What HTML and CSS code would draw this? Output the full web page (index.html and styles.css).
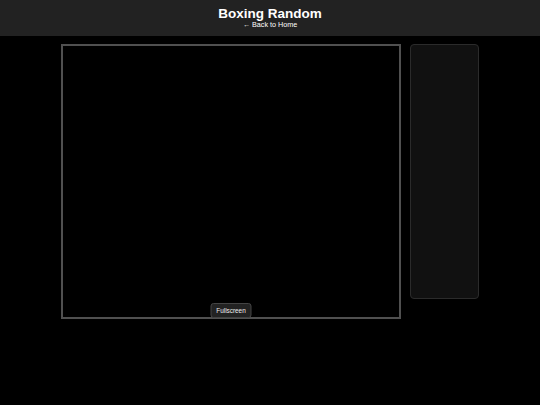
FILE: index.html
```html
<!DOCTYPE html>
<html>
<head>
<meta charset="utf-8">
<title>Boxing Random</title>
<link rel="stylesheet" href="styles.css">
</head>
<body>
<header class="top">
  <h1 class="title">Boxing Random</h1>
  <a class="back" href="#">← Back to Home</a>
</header>
<main class="stage">
  <div class="frame">
    <button class="fs-btn">Fullscreen</button>
  </div>
  <aside class="side"></aside>
</main>
</body>
</html>
```

FILE: styles.css
```css
html, body {
  margin: 0;
  padding: 0;
  background: #000;
  font-family: "Liberation Sans", Arial, sans-serif;
  color: #fff;
}
.top {
  height: 36px;
  box-sizing: border-box;
  padding-top: 6px;
  background: #222;
  text-align: center;
}
.title {
  margin: 0;
  font-size: 13.5px;
  line-height: 15px;
  font-weight: bold;
  color: #fff;
}
.back {
  display: block;
  font-size: 7.2px;
  line-height: 8px;
  color: #fff;
  text-decoration: none;
}
.stage {
  display: flex;
  justify-content: center;
  align-items: flex-start;
  gap: 9px;
  margin-top: 8px;
}
.frame {
  position: relative;
  width: 340px;
  height: 275px;
  box-sizing: border-box;
  border: 2px solid #505050;
  background: #000;
}
.fs-btn {
  position: absolute;
  left: 50%;
  bottom: -1px;
  transform: translateX(-50%);
  width: 41px;
  height: 15px;
  padding: 0;
  box-sizing: border-box;
  background: #222;
  border: 1px solid #444;
  border-radius: 3px;
  color: #eee;
  font-family: "Liberation Sans", Arial, sans-serif;
  font-size: 6.4px;
  line-height: 13px;
  text-align: center;
}
.side {
  width: 69px;
  height: 255px;
  box-sizing: border-box;
  background: #111;
  border: 1px solid #2b2b2b;
  border-radius: 4px;
}
```
